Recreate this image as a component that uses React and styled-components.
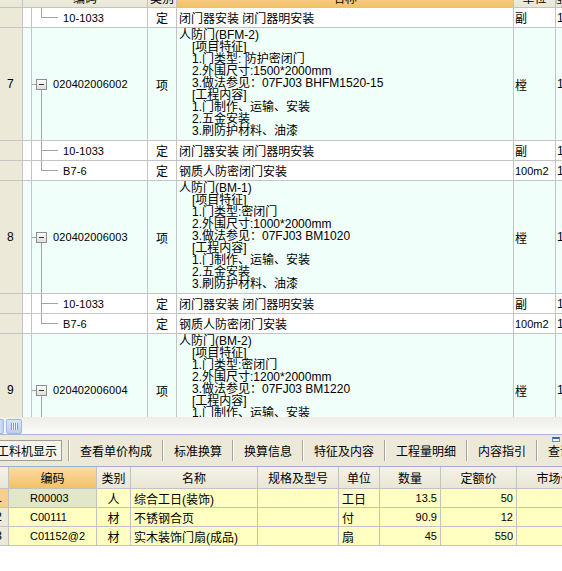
import React from 'react';
import styled, { createGlobalStyle } from 'styled-components';

const GlobalStyle = createGlobalStyle`
  html, body {
    margin: 0;
    padding: 0;
    background: #fff;
  }
  body {
    font-family: "Liberation Sans", "Noto Sans CJK SC", sans-serif;
    font-size: 12px;
    color: #000;
  }
`;

const LINE = '#C4C4C4';

const Screen = styled.div`
  width: 562px;
  height: 571px;
  overflow: hidden;
  display: flex;
  flex-direction: column;
  background: #fff;
`;

/* ---------- upper tree grid ---------- */

const TreeGrid = styled.div`
  height: 417px;
  flex-shrink: 0;
  overflow: hidden;
`;

const GridHead = styled.div`
  display: flex;
  height: 20px;
  margin-top: -12px;
  box-sizing: border-box;
  border-bottom: 1px solid ${LINE};
  background: linear-gradient(#F5F3EA, #E9E6D5);
`;

const HeadCell = styled.div`
  width: ${({ $w }) => ($w ? `${$w}px` : 'auto')};
  flex: ${({ $w }) => ($w ? '0 0 auto' : '1 1 auto')};
  box-sizing: border-box;
  border-right: 1px solid ${LINE};
  display: flex;
  align-items: center;
  justify-content: center;
  white-space: nowrap;
  overflow: hidden;
  background: ${({ $hot }) => ($hot ? 'linear-gradient(#FBDCA6, #F3C165)' : 'transparent')};
`;

const GridRow = styled.div`
  display: flex;
  flex-shrink: 0;
  height: ${({ $h }) => $h}px;
  box-sizing: border-box;
  border-bottom: 1px solid ${LINE};
  background: ${({ $item }) => ($item ? '#F0FFFA' : '#FFFFFF')};
`;

const Cell = styled.div`
  flex-shrink: 0;
  box-sizing: border-box;
  border-right: 1px solid ${LINE};
  display: flex;
  align-items: center;
  white-space: nowrap;
  overflow: hidden;
`;

const NumCell = styled(Cell)`
  width: 23px;
  padding-left: 7px;
  background: #ECE9D8;
`;

const MarkCell = styled(Cell)`
  width: 9px;
`;

const CodeCell = styled(Cell)`
  width: 116px;
  svg {
    flex-shrink: 0;
    display: block;
  }
`;

const CodeText = styled.span`
  margin-left: ${({ $child }) => ($child ? 5 : 0)}px;
  font-size: 11px;
  letter-spacing: 0.1px;
`;

const TypeCell = styled(Cell)`
  width: 29px;
  justify-content: center;
`;

const NameCell = styled(Cell)`
  width: 337px;
  padding-left: 2px;
  ${({ $multi }) =>
    $multi
      ? `
    flex-direction: column;
    align-items: flex-start;
    justify-content: flex-start;
    padding-top: 1px;
  `
      : ''}
`;

const NameLine = styled.div`
  height: 12px;
  line-height: 12px;
  white-space: nowrap;
  padding-left: ${({ $indent }) => ($indent ? 13 : 0)}px;
`;

const UnitCell = styled(Cell)`
  width: 42px;
  padding-left: 1px;
  font-size: ${({ $latin }) => ($latin ? 11 : 12)}px;
`;

const QtyCell = styled(Cell)`
  flex: 1 1 auto;
  padding-left: 1px;
  border-right: none;
`;

const ChildBranch = ({ h, last }) => {
  const c = Math.floor(h / 2) + 0.5;
  return (
    <svg width="26" height={h} shapeRendering="crispEdges">
      <path d={`M9.5 0V${last ? c : h}M9.5 ${c}H26`} stroke="#A3A3A3" fill="none" />
    </svg>
  );
};

const ItemNode = ({ h }) => {
  const c = Math.floor(h / 2) + 0.5;
  return (
    <svg width="21" height={h} shapeRendering="crispEdges">
      <defs>
        <linearGradient id="nodeFill" x1="0" y1="0" x2="0" y2="1">
          <stop offset="0" stopColor="#FFFFFF" />
          <stop offset="1" stopColor="#DCDCD4" />
        </linearGradient>
      </defs>
      <path d={`M0 ${c}H4M9.5 ${c + 5.5}V${h}`} stroke="#A3A3A3" fill="none" />
      <rect x="4.5" y={c - 5} width="10" height="10" fill="url(#nodeFill)" stroke="#8E8E8E" />
      <path d={`M7 ${c}H12`} stroke="#333" />
    </svg>
  );
};

const CHILD_H = 20;
const ITEM_H = 113;

const rows = [
  { kind: 'child', last: true, code: '10-1033', type: '定', name: '闭门器安装 闭门器明安装', unit: '副' },
  {
    kind: 'item', num: '7', code: '020402006002', type: '项', unit: '樘',
    lines: [
      ['人防门(BFM-2)', false],
      ['[项目特征]', true],
      ['1.门类型: 防护密闭门', true],
      ['2.外围尺寸:1500*2000mm', true],
      ['3.做法参见：07FJ03 BHFM1520-15', true],
      ['[工程内容]', true],
      ['1.门制作、运输、安装', true],
      ['2.五金安装', true],
      ['3.刷防护材料、油漆', true],
    ],
  },
  { kind: 'child', last: false, code: '10-1033', type: '定', name: '闭门器安装 闭门器明安装', unit: '副' },
  { kind: 'child', last: true, code: 'B7-6', type: '定', name: '钢质人防密闭门安装', unit: '100m2' },
  {
    kind: 'item', num: '8', code: '020402006003', type: '项', unit: '樘',
    lines: [
      ['人防门(BM-1)', false],
      ['[项目特征]', true],
      ['1.门类型:密闭门', true],
      ['2.外围尺寸:1000*2000mm', true],
      ['3.做法参见：07FJ03 BM1020', true],
      ['[工程内容]', true],
      ['1.门制作、运输、安装', true],
      ['2.五金安装', true],
      ['3.刷防护材料、油漆', true],
    ],
  },
  { kind: 'child', last: false, code: '10-1033', type: '定', name: '闭门器安装 闭门器明安装', unit: '副' },
  { kind: 'child', last: true, code: 'B7-6', type: '定', name: '钢质人防密闭门安装', unit: '100m2' },
  {
    kind: 'item', num: '9', code: '020402006004', type: '项', unit: '樘',
    lines: [
      ['人防门(BM-2)', false],
      ['[项目特征]', true],
      ['1.门类型:密闭门', true],
      ['2.外围尺寸:1200*2000mm', true],
      ['3.做法参见：07FJ03 BM1220', true],
      ['[工程内容]', true],
      ['1.门制作、运输、安装', true],
      ['2.五金安装', true],
      ['3.刷防护材料、油漆', true],
    ],
  },
];

const TreeRow = ({ row }) => {
  const item = row.kind === 'item';
  const h = item ? ITEM_H : CHILD_H;
  return (
    <GridRow $h={h} $item={item}>
      <NumCell>{row.num || ''}</NumCell>
      <MarkCell />
      <CodeCell>
        {item ? <ItemNode h={h - 1} /> : <ChildBranch h={h - 1} last={row.last} />}
        <CodeText $child={!item}>{row.code}</CodeText>
      </CodeCell>
      <TypeCell>{row.type}</TypeCell>
      {item ? (
        <NameCell $multi>
          {row.lines.map(([text, indent], i) => (
            <NameLine key={i} $indent={indent}>{text}</NameLine>
          ))}
        </NameCell>
      ) : (
        <NameCell>{row.name}</NameCell>
      )}
      <UnitCell $latin={/^[0-9a-z]+$/i.test(row.unit)}>{row.unit}</UnitCell>
      <QtyCell>1</QtyCell>
    </GridRow>
  );
};

/* ---------- scrollbar ---------- */

const HScroll = styled.div`
  height: 18px;
  flex-shrink: 0;
  box-sizing: border-box;
  border-bottom: 1px solid #A8B9D3;
  background: linear-gradient(#EEEDE6, #FBFBF8);
  display: flex;
  align-items: center;
  gap: 2px;
  padding-top: 1px;
`;

const ScrollEnd = styled.div`
  width: 4px;
  height: 15px;
  box-sizing: border-box;
  border: 1px solid #A6BAE6;
  border-left: none;
  border-radius: 0 2px 2px 0;
  background: linear-gradient(90deg, #D2DEFA, #B9CCF4);
`;

const ScrollThumb = styled.div`
  width: 16px;
  height: 15px;
  box-sizing: border-box;
  border: 1px solid #A2B6E4;
  border-radius: 2px;
  background: linear-gradient(#D8E3FC, #BCCEF6);
  display: flex;
  align-items: center;
  justify-content: center;
`;

const Grip = styled.div`
  width: 7px;
  height: 7px;
  background: repeating-linear-gradient(90deg, #7E98D4 0 1px, #EEF3FF 1px 2px);
`;

/* ---------- tab bar ---------- */

const TabBar = styled.div`
  position: relative;
  height: 32px;
  flex-shrink: 0;
  box-sizing: border-box;
  border-bottom: 1px solid #9DB1CE;
  background: #ECE9D8;
  display: flex;
  align-items: center;
  overflow: hidden;
  white-space: nowrap;
`;

const TabStrip = styled.div`
  display: flex;
  align-items: center;
  margin-left: -8px;
`;

const ActiveTab = styled.div`
  height: 21px;
  box-sizing: border-box;
  padding: 0 4px;
  margin-right: 6px;
  display: flex;
  align-items: center;
  border: 1px solid #A09E92;
  background: #F4F3EC;
`;

const Tab = styled.div`
  padding: 0 10px;
  height: 21px;
  display: flex;
  align-items: center;
`;

const TabSep = styled.div`
  width: 2px;
  height: 21px;
  box-sizing: border-box;
  border-left: 1px solid #A7A497;
  border-right: 1px solid #FFFFFF;
`;

const PanelButton = styled.span`
  position: absolute;
  right: 2px;
  top: 2px;
  width: 8px;
  height: 5px;
  box-sizing: border-box;
  border: 1px solid #7C8CAC;
  border-top: 2px solid #3A64C0;
  background: #F4F4F4;
`;

/* ---------- resource table ---------- */

const ResGrid = styled.div`
  flex-shrink: 0;
  overflow: hidden;
`;

const ResRow = styled.div`
  display: flex;
  height: ${({ $h }) => $h}px;
  box-sizing: border-box;
  border-bottom: 1px solid #C2C2C2;
  background: ${({ $head }) => ($head ? 'linear-gradient(#F4F2E8, #E9E6D6)' : '#FFFFC2')};
`;

const ResCell = styled.div`
  width: ${({ $w }) => $w}px;
  flex-shrink: 0;
  box-sizing: border-box;
  border-right: 1px solid #C2C2C2;
  display: flex;
  align-items: center;
  white-space: nowrap;
  overflow: hidden;
  justify-content: ${({ $align }) =>
    $align === 'center' ? 'center' : $align === 'right' ? 'flex-end' : 'flex-start'};
  padding: ${({ $pad }) => $pad || '0'};
  background: ${({ $bg }) => $bg || 'transparent'};
  font-size: ${({ $small }) => ($small ? 11 : 12)}px;
`;

const resCols = [
  { w: 9, title: '' },
  { w: 88, title: '编码', hot: true, pad: '0 0 0 21px', small: true },
  { w: 34, title: '类别', align: 'center' },
  { w: 127, title: '名称', pad: '0 0 0 3px' },
  { w: 81, title: '规格及型号', pad: '0 0 0 3px' },
  { w: 41, title: '单位', pad: '0 0 0 3px' },
  { w: 61, title: '数量', align: 'right', pad: '0 3px 0 0', small: true },
  { w: 76, title: '定额价', align: 'right', pad: '0 3px 0 0', small: true },
  { w: 76, title: '市场价', align: 'right', pad: '0 3px 0 0', small: true },
];

const resRows = [
  ['1', 'R00003', '人', '综合工日(装饰)', '', '工日', '13.5', '50', ''],
  ['2', 'C00111', '材', '不锈钢合页', '', '付', '90.9', '12', ''],
  ['3', 'C01152@2', '材', '实木装饰门扇(成品)', '', '扇', '45', '550', ''],
];

const tabs = ['查看单价构成', '标准换算', '换算信息', '特征及内容', '工程量明细', '内容指引', '查询'];

export default function App() {
  return (
    <>
      <GlobalStyle />
      <Screen>
        <TreeGrid>
          <GridHead>
            <HeadCell $w={23} />
            <HeadCell $w={125}>编码</HeadCell>
            <HeadCell $w={29}>类别</HeadCell>
            <HeadCell $w={337} $hot>名称</HeadCell>
            <HeadCell $w={42}>单位</HeadCell>
            <HeadCell>工程量</HeadCell>
          </GridHead>
          {rows.map((row, i) => (
            <TreeRow key={i} row={row} />
          ))}
        </TreeGrid>

        <HScroll>
          <ScrollEnd />
          <ScrollThumb>
            <Grip />
          </ScrollThumb>
        </HScroll>

        <TabBar>
          <TabStrip>
            <ActiveTab>工料机显示</ActiveTab>
            {tabs.map((t) => (
              <React.Fragment key={t}>
                <TabSep />
                <Tab>{t}</Tab>
              </React.Fragment>
            ))}
          </TabStrip>
          <PanelButton />
        </TabBar>

        <ResGrid>
          <ResRow $h={22} $head>
            {resCols.map((c, i) => (
              <ResCell
                key={i}
                $w={c.w}
                $align="center"
                $bg={c.hot ? 'linear-gradient(#FBDCA6, #F3C165)' : undefined}
              >
                {c.title}
              </ResCell>
            ))}
          </ResRow>
          {resRows.map((r, ri) => (
            <ResRow key={ri} $h={19}>
              {r.map((v, ci) => {
                const c = resCols[ci];
                if (ci === 0) {
                  return (
                    <ResCell key={ci} $w={c.w} $align="right" $pad="0 6px 0 0" $bg={ri === 0 ? '#F9CF8E' : '#ECE9D8'}>
                      {v}
                    </ResCell>
                  );
                }
                return (
                  <ResCell
                    key={ci}
                    $w={c.w}
                    $align={c.align}
                    $pad={c.pad}
                    $small={c.small}
                    $bg={ri === 0 && ci === 1 ? '#E1E7C7' : undefined}
                  >
                    {v}
                  </ResCell>
                );
              })}
            </ResRow>
          ))}
        </ResGrid>
      </Screen>
    </>
  );
}
